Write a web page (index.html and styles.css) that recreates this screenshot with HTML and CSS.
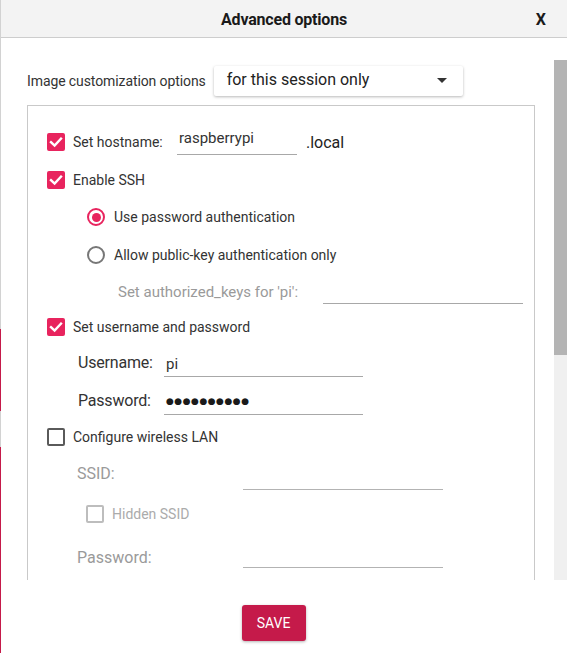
FILE: index.html
```html
<!DOCTYPE html>
<html lang="en">
<head>
<meta charset="utf-8">
<title>Advanced options</title>
<link rel="stylesheet" href="styles.css">
</head>
<body>
<div class="window">
  <div class="edge"></div>
  <div class="dialog">
    <header class="titlebar">
      <span></span>
      <h1 class="title">Advanced options</h1>
      <span class="close">X</span>
    </header>
    <div class="main">
      <div class="scroll">
        <div class="mode-row">
          <span class="mode-label">Image customization options</span>
          <div class="select">
            <span>for this session only</span>
            <span class="caret"></span>
          </div>
        </div>
        <div class="frame">
          <div class="row r-host">
            <span class="check on"><svg viewBox="0 0 18 18"><path d="M4 9.2 L7.6 12.6 L14 5.6" /></svg></span>
            <span class="lbl host-lbl">Set hostname:</span>
            <div class="field host-field">raspberrypi</div>
            <span class="suffix">.local</span>
          </div>
          <div class="row r-ssh">
            <span class="check on"><svg viewBox="0 0 18 18"><path d="M4 9.2 L7.6 12.6 L14 5.6" /></svg></span>
            <span class="lbl">Enable SSH</span>
          </div>
          <div class="row r-radio1 indent-radio">
            <span class="radio on"></span>
            <span class="lbl">Use password authentication</span>
          </div>
          <div class="row r-radio2 indent-radio">
            <span class="radio"></span>
            <span class="lbl">Allow public-key authentication only</span>
          </div>
          <div class="row r-keys indent-keys">
            <span class="big-lbl muted keys-lbl">Set authorized_keys for 'pi':</span>
            <div class="field keys-field"></div>
          </div>
          <div class="row r-user-chk">
            <span class="check on"><svg viewBox="0 0 18 18"><path d="M4 9.2 L7.6 12.6 L14 5.6" /></svg></span>
            <span class="lbl">Set username and password</span>
          </div>
          <div class="row r-user indent-user">
            <span class="big-lbl user-lbl">Username:</span>
            <div class="field user-field">pi</div>
          </div>
          <div class="row r-pass indent-user">
            <span class="big-lbl user-lbl">Password:</span>
            <div class="field pass-field"><span class="dots">●●●●●●●●●●</span></div>
          </div>
          <div class="row r-wifi">
            <span class="check"></span>
            <span class="lbl">Configure wireless LAN</span>
          </div>
          <div class="row r-ssid indent-ssid">
            <span class="big-lbl muted ssid-lbl">SSID:</span>
            <div class="field ssid-field dim"></div>
          </div>
          <div class="row r-hidden indent-hidden">
            <span class="check disabled"></span>
            <span class="lbl faint">Hidden SSID</span>
          </div>
          <div class="row r-wpass indent-ssid">
            <span class="big-lbl muted ssid-lbl">Password:</span>
            <div class="field wpass-field dim"></div>
          </div>
        </div>
      </div>
      <div class="scrollbar">
        <div class="track"><div class="thumb"></div></div>
      </div>
    </div>
    <footer class="footer">
      <button class="save">SAVE</button>
    </footer>
  </div>
</div>
</body>
</html>
```
FILE: styles.css
```css
* { box-sizing: border-box; }

html, body {
  margin: 0;
  padding: 0;
  background: #ffffff;
}

body {
  font-family: Roboto, "Liberation Sans", Arial, sans-serif;
  color: #333333;
  width: 567px;
  height: 653px;
  overflow: hidden;
}

.window {
  display: flex;
  height: 653px;
}

.edge {
  width: 1px;
  flex: 0 0 1px;
  background: linear-gradient(to bottom,
    #d2d2d2 0, #d2d2d2 329px,
    #c51a4a 329px, #c51a4a 411px,
    #d2d2d2 411px, #d2d2d2 447px,
    #c51a4a 447px, #c51a4a 100%);
}

.dialog {
  flex: 1;
  display: flex;
  flex-direction: column;
  min-width: 0;
}

/* Title bar */
.titlebar {
  height: 38px;
  flex: 0 0 38px;
  background: #f3f3f3;
  border-bottom: 1px solid #cdcdcd;
  display: grid;
  grid-template-columns: 1fr auto 1fr;
  align-items: center;
  padding-top: 2px;
}

.title {
  margin: 0;
  font-size: 16px;
  font-weight: 700;
  color: #1a1a1a;
  letter-spacing: -0.2px;
}

.close {
  justify-self: end;
  margin-right: 21px;
  font-size: 16px;
  font-weight: 700;
  color: #1a1a1a;
}

/* Scrollable body */
.main {
  height: 542px;
  flex: 0 0 542px;
  display: flex;
  overflow: hidden;
}

.scroll {
  flex: 1;
  padding-left: 26px;
  padding-right: 19px;
  overflow: hidden;
}

.mode-row {
  display: flex;
  align-items: center;
  gap: 8px;
  padding-top: 28px;
}

.mode-label {
  font-size: 14px;
  color: #333333;
  letter-spacing: -0.1px;
}

.select {
  width: 249px;
  height: 30px;
  display: flex;
  align-items: center;
  justify-content: space-between;
  padding: 0 16px 3px 13px;
  font-size: 16px;
  color: #222222;
  background: #ffffff;
  border-radius: 2px;
  box-shadow: 0 1px 3px rgba(0, 0, 0, 0.28);
}

.caret {
  width: 0;
  height: 0;
  margin-top: 2px;
  border-left: 5px solid transparent;
  border-right: 5px solid transparent;
  border-top: 5px solid #333333;
}

.frame {
  margin-top: 9px;
  height: 520px;
  border: 1px solid #c9c9c9;
  border-bottom: none;
  padding: 17px 0 0 19px;
}

.row {
  display: flex;
  align-items: center;
}

.r-host { height: 38px; }
.r-ssh { height: 37px; }
.r-radio1 { height: 38px; }
.r-radio2 { height: 38px; }
.r-keys { height: 36px; }
.r-user-chk { height: 34px; }
.r-user { height: 37px; }
.r-pass { height: 38px; }
.r-wifi { height: 35px; }
.r-ssid { height: 39px; }
.r-hidden { height: 42px; }
.r-wpass { height: 44px; }

.indent-radio { padding-left: 40px; }
.indent-keys { padding-left: 71px; }
.indent-user { padding-left: 31px; }
.indent-ssid { padding-left: 30px; }
.indent-hidden { padding-left: 39px; }

/* Checkboxes */
.check {
  width: 18px;
  height: 18px;
  flex: 0 0 18px;
  border-radius: 2px;
  border: 2px solid #5a5a5a;
  margin-right: 8px;
  display: flex;
  align-items: center;
  justify-content: center;
}

.check.on {
  background: #e8245e;
  border-color: #e8245e;
}

.check svg {
  width: 18px;
  height: 18px;
  flex: 0 0 18px;
}

.check path {
  fill: none;
  stroke: #ffffff;
  stroke-width: 2.4;
  stroke-linecap: square;
}

.check.disabled {
  border-color: #bdbdbd;
}

/* Radios */
.radio {
  width: 18px;
  height: 18px;
  flex: 0 0 18px;
  border-radius: 50%;
  border: 2px solid #777777;
  margin-right: 9px;
  display: flex;
  align-items: center;
  justify-content: center;
}

.radio.on {
  border-color: #e8245e;
}

.radio.on::after {
  content: "";
  width: 9px;
  height: 9px;
  border-radius: 50%;
  background: #e8245e;
}

/* Labels */
.lbl {
  font-size: 14px;
  color: #333333;
}

.big-lbl {
  font-size: 16px;
  color: #333333;
}

.muted { color: #9a9a9a; }
.faint { color: #ababab; }

.keys-lbl { font-size: 15px; flex: 0 0 205px; }
.host-lbl { flex: 0 0 104px; }
.user-lbl { flex: 0 0 86px; letter-spacing: -0.2px; }
.ssid-lbl { flex: 0 0 166px; }

/* Text fields */
.field {
  border-bottom: 1px solid #a8a8a8;
  font-size: 15px;
  line-height: 18px;
  color: #333333;
  padding-left: 2px;
}

.field.dim {
  border-bottom-color: #b3b3b3;
}

.host-field {
  width: 120px;
  height: 26px;
}

.suffix {
  margin-left: 9px;
  font-size: 16px;
  color: #222222;
}

.keys-field {
  width: 200px;
  height: 24px;
}

.user-field {
  width: 199px;
  height: 28px;
  padding-top: 6px;
}

.pass-field {
  width: 199px;
  height: 30px;
  padding-top: 5px;
}

.dots {
  font-family: "DejaVu Sans", sans-serif;
  font-size: 9px;
  letter-spacing: 0.5px;
  color: #1a1a1a;
}

.ssid-field {
  width: 200px;
  height: 32px;
}

.wpass-field {
  width: 200px;
  height: 22px;
}

/* Scrollbar */
.scrollbar {
  width: 13px;
  flex: 0 0 13px;
  padding-top: 22px;
  display: flex;
}

.track {
  flex: 1;
  background: #f0f0f0;
}

.thumb {
  height: 295px;
  background: #b4b4b4;
}

/* Footer */
.footer {
  flex: 1;
  display: flex;
  justify-content: center;
  align-items: flex-start;
  padding-top: 25px;
  padding-right: 21px;
}

.save {
  width: 64px;
  height: 36px;
  border: none;
  border-radius: 3px;
  background: #c51a4a;
  color: #ffffff;
  font-family: Roboto, "Liberation Sans", Arial, sans-serif;
  font-size: 14px;
  box-shadow: 0 1px 3px rgba(0, 0, 0, 0.3);
  padding: 0;
}
```
